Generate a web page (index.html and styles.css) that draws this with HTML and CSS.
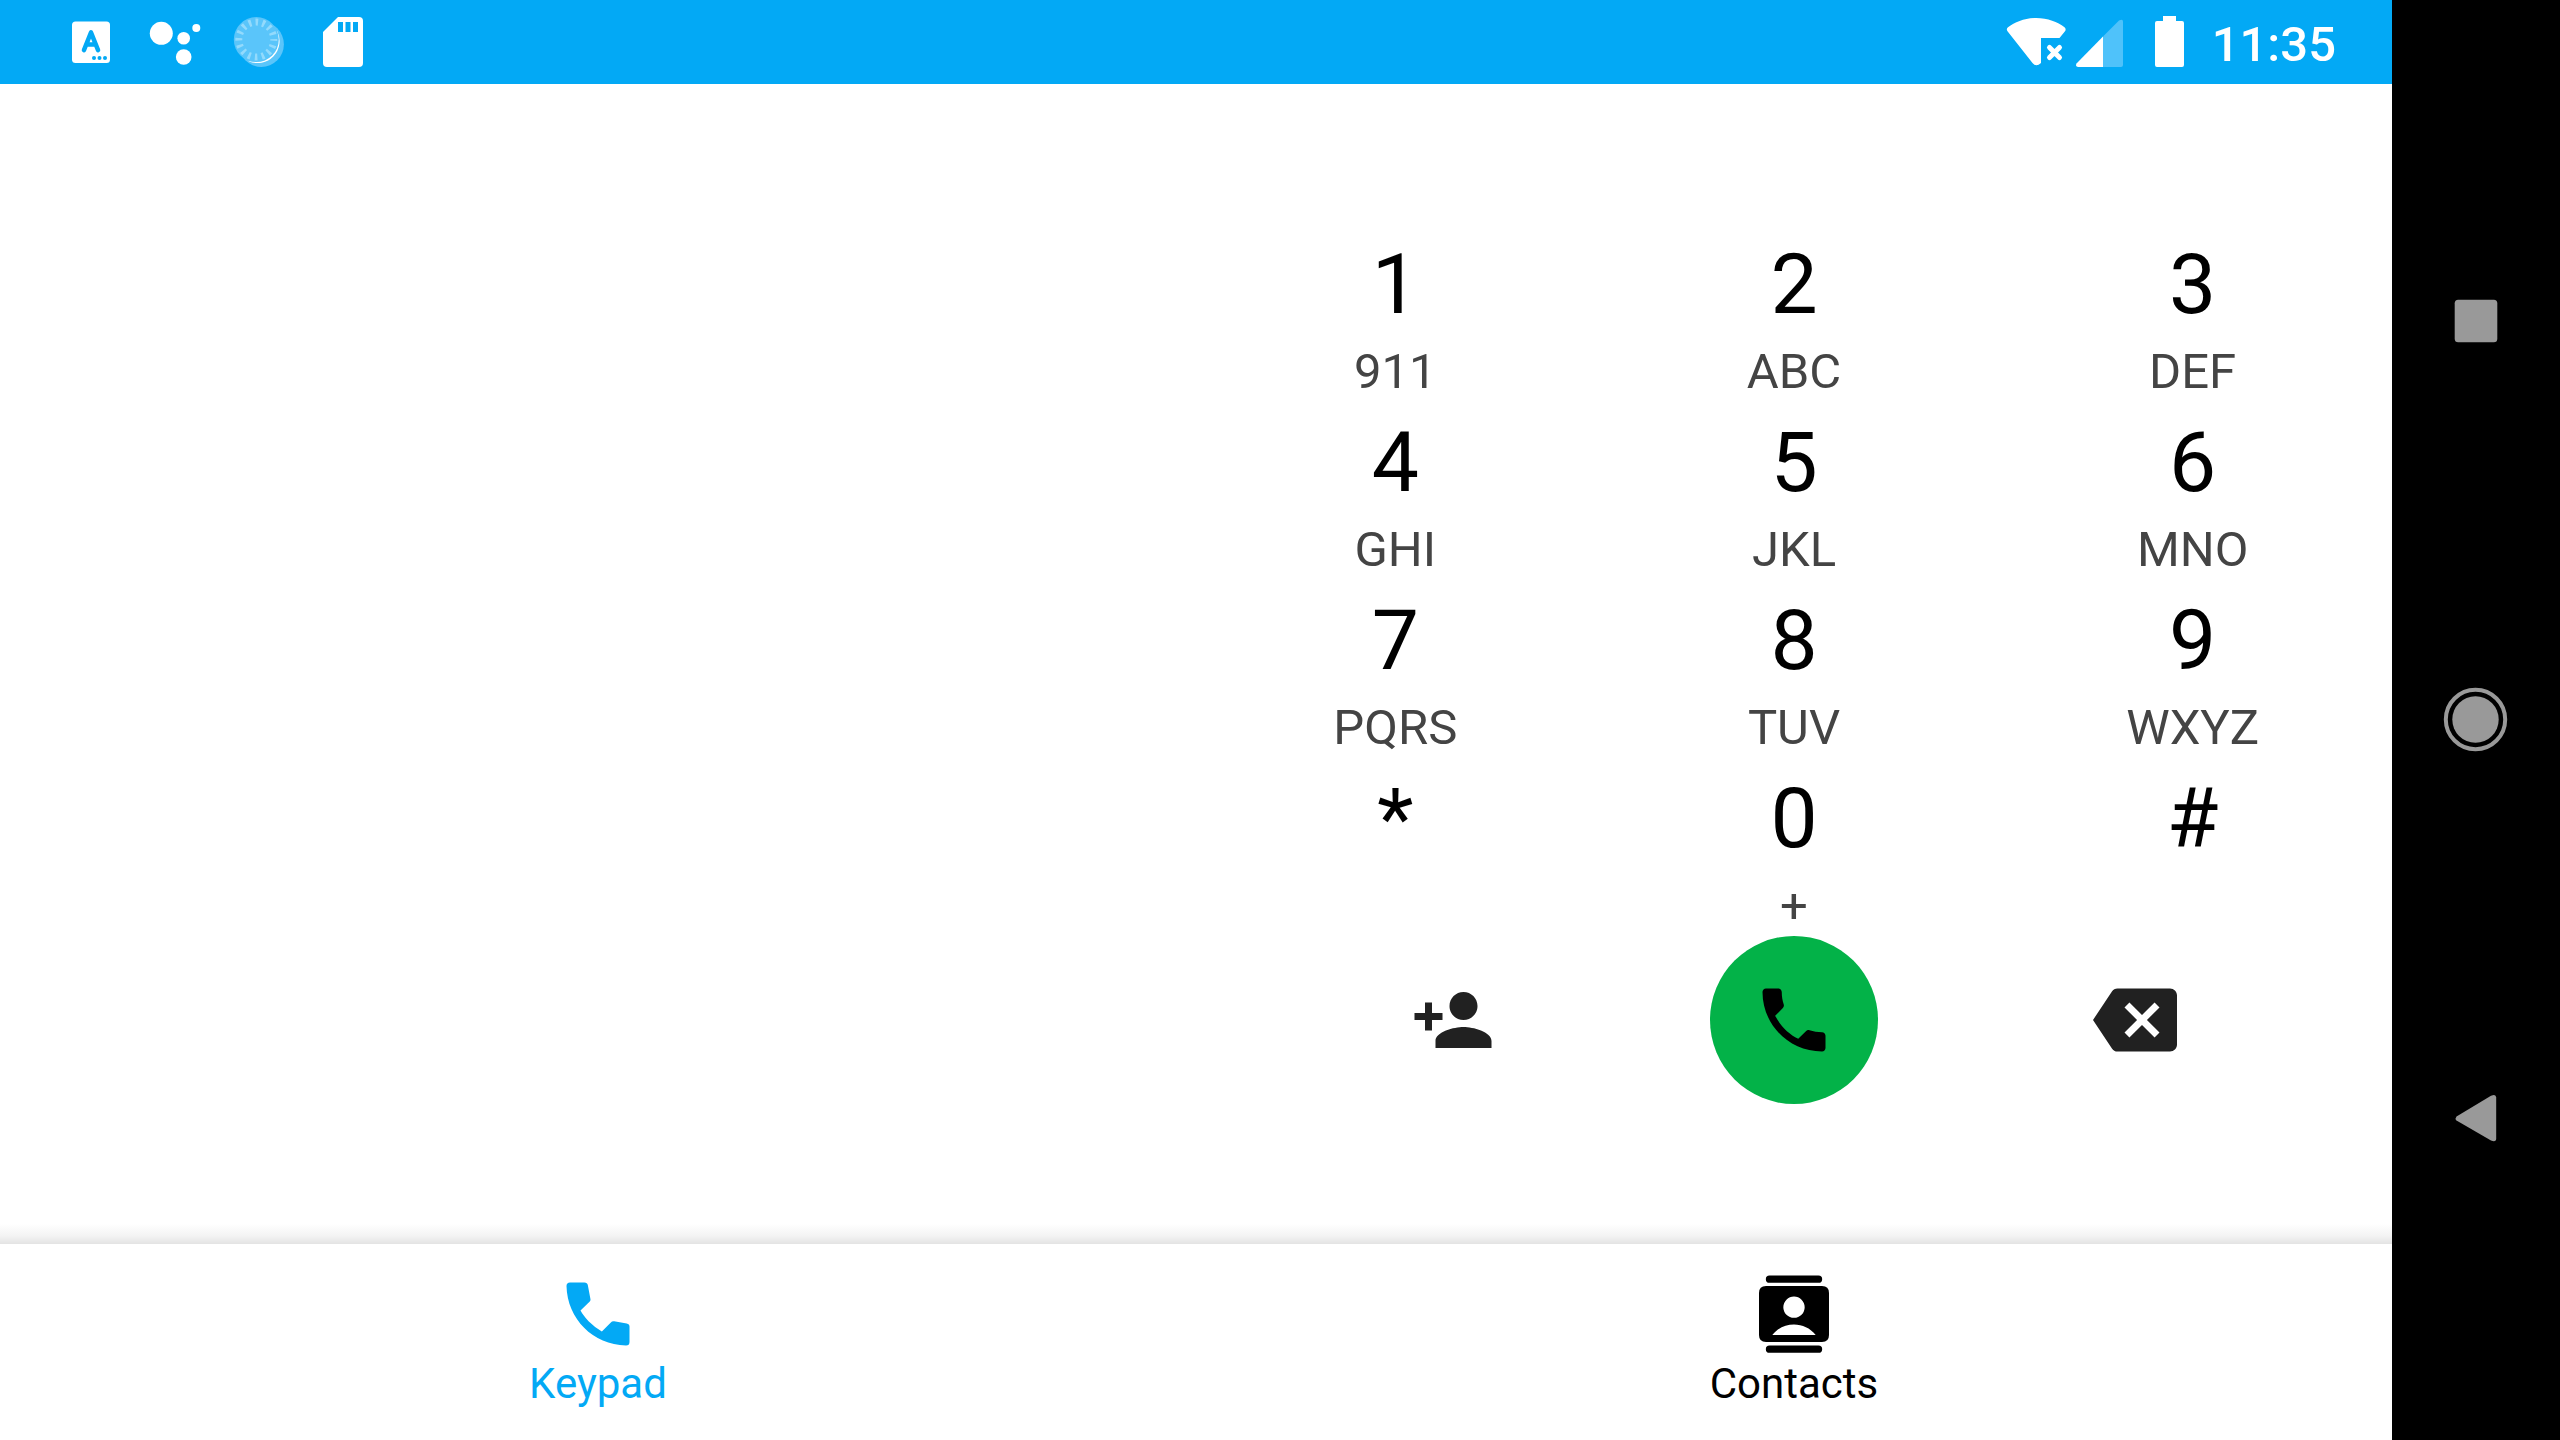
FILE: index.html
```html
<!DOCTYPE html>
<html lang="en">
<head>
<meta charset="utf-8">
<meta name="viewport" content="width=device-width, initial-scale=1">
<title>Phone</title>
<link rel="stylesheet" href="styles.css">
</head>
<body>
<div class="device">
  <div class="app">
    <header class="status">
      <div class="status-group">
        <svg class="status-icon" viewBox="0 0 84 84" aria-hidden="true">
          <rect x="23" y="21.500" width="38" height="41.500" rx="3.500" fill="#fff"/>
          <path d="M35 50l7-17.500 7 17.500M37.500 44.500h9" fill="none" stroke="#03a9f5" stroke-width="4.600" stroke-linecap="round" stroke-linejoin="round"/>
          <g fill="#03a9f5"><circle cx="45" cy="58" r="2"/><circle cx="50.500" cy="58" r="2"/><circle cx="56" cy="58" r="2"/></g>
        </svg>
        <svg class="status-icon" viewBox="0 0 84 84" fill="#fff" aria-hidden="true">
          <circle cx="28.300" cy="33.300" r="11.500"/><circle cx="50.700" cy="38.300" r="6.300"/><circle cx="63.300" cy="28" r="4"/><circle cx="50.700" cy="57" r="7.800"/>
        </svg>
        <svg class="status-icon" viewBox="0 0 84 84" aria-hidden="true">
          <circle cx="44.300" cy="44.300" r="22.600" fill="#5ac5fa"/>
          <path d="M60 30.700A22 22 0 0 1 31.300 61z" fill="#fff"/>
          <circle cx="39.300" cy="39.600" r="22.500" fill="#5ac5fa"/>
          <circle cx="39.300" cy="39.600" r="17.500" fill="none" stroke="#93dafc" stroke-width="7" stroke-dasharray="2.600 4.272" stroke-dashoffset="1.300"/>
        </svg>
        <svg class="status-icon" viewBox="0 0 84 84" aria-hidden="true">
          <path d="M37 17h21q4 0 4 4v42q0 4-4 4H26q-4 0-4-4V32z" fill="#fff"/>
          <path d="M37 22h5v10h-5zM44.500 22h5v10h-5zM52 22h5v10h-5z" fill="#03a9f5"/>
        </svg>
      </div>
      <div class="status-group status-end">
        <svg class="wifi-icon" viewBox="0 0 72 84" aria-hidden="true">
          <path d="M36 18c12 0 21.500 4 28.500 9.200q2 1.800.5 4L59.500 38H41v25q-5 4.500-8.500 0L7.500 31.200q-1.600-2.200.5-4C15 22 25 18 36 18z" fill="#fff"/>
          <path d="M49.500 47.500l10 10M59.500 47.500l-10 10" stroke="#fff" stroke-width="5" stroke-linecap="round"/>
        </svg>
        <svg class="signal-icon" viewBox="0 0 56 84" aria-hidden="true">
          <path d="M31 36.500L47 20.500q4-2 4 1V65q0 2-2 2H31z" fill="#4fc2fa"/>
          <path d="M31 36.500V67H6q-3-.500-1.500-3.500z" fill="#fff"/>
        </svg>
        <svg class="status-icon" viewBox="0 0 84 84" aria-hidden="true">
          <path d="M35 16h13v5h6q2 0 2 2v42q0 2-2 2H29q-2 0-2-2V23q0-2 2-2h6z" fill="#fff"/>
        </svg>
        <time class="clock">11:35</time>
      </div>
    </header>

    <main class="dialer">
      <section class="entry" aria-label="Number"></section>
      <section class="pad" aria-label="Keypad">
        <div class="keys">
          <button class="key"><span class="digit">1</span><span class="letters">911</span></button>
          <button class="key"><span class="digit">2</span><span class="letters">ABC</span></button>
          <button class="key"><span class="digit">3</span><span class="letters">DEF</span></button>
          <button class="key"><span class="digit">4</span><span class="letters">GHI</span></button>
          <button class="key"><span class="digit">5</span><span class="letters">JKL</span></button>
          <button class="key"><span class="digit">6</span><span class="letters">MNO</span></button>
          <button class="key"><span class="digit">7</span><span class="letters">PQRS</span></button>
          <button class="key"><span class="digit">8</span><span class="letters">TUV</span></button>
          <button class="key"><span class="digit">9</span><span class="letters">WXYZ</span></button>
          <button class="key"><span class="digit">*</span><span class="letters"></span></button>
          <button class="key"><span class="digit">0</span><span class="letters">+</span></button>
          <button class="key"><span class="digit">#</span><span class="letters"></span></button>
        </div>
        <div class="actions">
          <button class="action" aria-label="Add contact">
            <svg class="icon" viewBox="0 0 24 24"><path d="M15 12c2.210 0 4-1.790 4-4s-1.790-4-4-4-4 1.790-4 4 1.790 4 4 4zm-9-2V7H4v3H1v2h3v3h2v-3h3v-2H6zm9 4c-2.670 0-8 1.340-8 4v2h16v-2c0-2.660-5.330-4-8-4z"/></svg>
          </button>
          <button class="action call" aria-label="Call">
            <svg class="icon" viewBox="0 0 24 24"><path d="M6.620 10.790c1.440 2.830 3.760 5.140 6.590 6.590l2.200-2.200c.27-.27.67-.36 1.020-.24 1.120.37 2.330.57 3.570.57.550 0 1 .45 1 1V20c0 .550-.45 1-1 1-9.390 0-17-7.610-17-17 0-.550.450-1 1-1h3.500c.550 0 1 .450 1 1 0 1.250.2 2.450.57 3.570.11.350.03.740-.25 1.020l-2.200 2.200z"/></svg>
          </button>
          <button class="action" aria-label="Delete">
            <svg class="icon" viewBox="0 0 24 24"><path d="M22 3H7c-.69 0-1.230.35-1.590.88L0 12l5.410 8.110c.36.530.9.890 1.590.89h15c1.100 0 2-.9 2-2V5c0-1.100-.9-2-2-2zm-3 12.590L17.590 17 14 13.410 10.410 17 9 15.590 12.590 12 9 8.410 10.410 7 14 10.590 17.590 7 19 8.410 15.410 12 19 15.590z"/></svg>
          </button>
        </div>
      </section>
    </main>

    <nav class="tabs">
      <a class="tab tab-active" href="#keypad" aria-current="page">
        <svg class="icon" viewBox="0 0 24 24" aria-hidden="true"><path d="M4 3h4.100q.850 0 1 .8l.750 4q.1.300-.2.600L7 11q.7 1.300 2.300 3.100 1.800 1.800 3.800 2.900l2.500-2.500q.4-.450 1-.4l3.600.6q.8.150.8.900V20q0 1-1 1C10.600 20.800 3.200 13.400 3 4q0-1 1-1z"/></svg>
        <span class="tab-label">Keypad</span>
      </a>
      <a class="tab" href="#contacts">
        <svg class="icon" viewBox="0 0 24 24" aria-hidden="true"><path fill-rule="evenodd" d="M5 1h14a1 1 0 0 1 0 2.100H5A1 1 0 0 1 5 1zM5 21h14a1 1 0 0 1 0 2.100H5A1 1 0 0 1 5 21zM4 4h16q2 0 2 2v12q0 2-2 2H4q-2 0-2-2V6q0-2 2-2zM12 7a3.050 3.050 0 1 0 0 6.100A3.050 3.050 0 0 0 12 7zM5.800 18h12.400C16.600 16 14.400 15 12 15s-4.600 1-6.200 3z"/></svg>
        <span class="tab-label">Contacts</span>
      </a>
    </nav>
  </div>

  <nav class="system" aria-label="System">
    <button class="system-button" aria-label="Recent apps"><svg class="system-icon" viewBox="0 0 84 84"><rect x="20.700" y="20.700" width="42.600" height="42.600" rx="3.500"/></svg></button>
    <button class="system-button" aria-label="Home"><svg class="system-icon" viewBox="0 0 84 84"><circle cx="41.500" cy="41.500" r="23.200"/><circle cx="41.500" cy="41.500" r="29.700" fill="none" stroke="#999" stroke-width="4"/></svg></button>
    <button class="system-button" aria-label="Back"><svg class="system-icon" viewBox="0 0 84 84"><path d="M22.500 39.500L57 18.800q5-2.300 5.200 1.700V61.500q0 4-5.200 2L22.500 43.500q-1.800-2 0-4z"/></svg></button>
  </nav>
</div>
</body>
</html>
```
FILE: styles.css
```css
* {
  box-sizing: border-box;
}

body {
  margin: 0;
  background: #000;
  color: #000;
  font-family: Roboto, "Liberation Sans", sans-serif;
}

button {
  margin: 0;
  padding: 0;
  border: 0;
  background: none;
  color: inherit;
  font: inherit;
  cursor: pointer;
}

svg {
  display: block;
  flex: none;
}

.device {
  display: flex;
  min-height: 100vh;
}

.app {
  display: flex;
  flex: 1;
  flex-direction: column;
  background: #fff;
}

/* Status bar */
.status {
  display: flex;
  justify-content: space-between;
  padding: 0 56px 0 49px;
  background: #03a9f5;
  color: #fff;
}

.status-group {
  display: flex;
}

.status-icon {
  width: 84px;
  height: 84px;
}

.wifi-icon {
  width: 72px;
  height: 84px;
}

.signal-icon {
  width: 56px;
  height: 84px;
}

.clock {
  padding-top: 6px;
  font-size: 49px;
  font-weight: 500;
  line-height: 78px;
}

/* Dialer, with the shade the tab bar casts along its lower edge */
.dialer {
  display: grid;
  flex: 1;
  grid-template-columns: 1fr 1fr;
  align-items: center;
  background: linear-gradient(to top, #e3e3e3, #f3f3f3 8px, #fff 20px);
}

.keys {
  display: grid;
  grid-template-columns: repeat(3, 1fr);
}

.key {
  display: flex;
  flex-direction: column;
  align-items: center;
}

.digit {
  padding-top: 10px;
  font-size: 84px;
  line-height: 102px;
}

.letters {
  min-height: 66px;
  padding-top: 6px;
  color: #444;
  font-size: 49px;
  line-height: 60px;
}

.actions {
  display: flex;
  align-items: center;
  justify-content: space-evenly;
}

.action {
  color: #212121;
}

.call {
  display: flex;
  align-items: center;
  justify-content: center;
  width: 168px;
  height: 168px;
  border-radius: 50%;
  background: #03b248;
  color: #000;
}

.icon {
  width: 84px;
  height: 84px;
  fill: currentColor;
}

/* Bottom tabs */
.tabs {
  display: grid;
  grid-template-columns: 1fr 1fr;
}

.tab {
  display: flex;
  flex-direction: column;
  align-items: center;
  padding: 28px 0;
  color: #000;
  text-decoration: none;
}

.tab-active {
  color: #03a9f5;
}

.tab-label {
  font-size: 42px;
  line-height: 56px;
}

/* System navigation */
.system {
  display: grid;
  grid-template-rows: repeat(3, 1fr);
  width: 168px;
  padding: 122px 0;
  background: #000;
}

.system-button {
  display: flex;
  align-items: center;
  justify-content: center;
}

.system-icon {
  width: 84px;
  height: 84px;
  fill: #999;
}
```
